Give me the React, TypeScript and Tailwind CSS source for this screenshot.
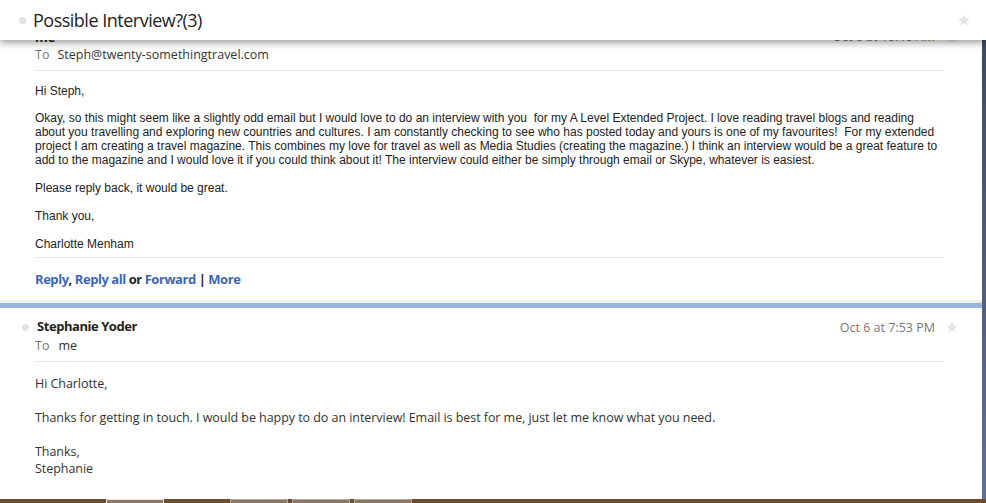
import React from "react";

const seg = { fontFamily: '"Open Sans", "Noto Sans", sans-serif' } as React.CSSProperties;
const arial = { fontFamily: '"Liberation Sans", Arial, sans-serif' } as React.CSSProperties;

function Star({ className }: { className: string }) {
  return (
    <svg viewBox="0 0 24 24" className={className} fill="currentColor">
      <path d="M12 2.5l2.9 6.6 7.1.6-5.4 4.7 1.6 7-6.2-3.8-6.2 3.8 1.6-7L2 9.7l7.1-.6z" />
    </svg>
  );
}

export default function App() {
  return (
    <div className="w-[986px] h-[503px] overflow-hidden bg-[#6b4d2e] flex flex-col" style={seg}>
      <div className="h-[499px] flex shrink-0">
        <div className="w-[982px] bg-white flex flex-col">
          {/* header */}
          <div className="relative z-10 h-[40px] w-[986px] bg-white flex items-center shadow-[0_3px_7px_rgba(0,0,0,0.38)] shrink-0">
            <div className="ml-[19px] w-[7px] h-[7px] rounded-full bg-[#e2e2e2]" />
            <div className="ml-[7px] text-[18px] text-[#222] leading-none tracking-[-0.5px]">Possible Interview?(3)</div>
            <div className="flex-1" />
            <Star className="w-[14px] h-[14px] text-[#e4e4e4] mr-[15px]" />
          </div>

          <div className="-mt-[11px] flex flex-col">
            {/* first message */}
            <div className="h-[17px] flex items-center pl-[35px] pr-[23px]">
              <span className="text-[13px] font-bold text-[#222]">me</span>
              <span className="ml-auto text-[12.5px] text-[#777]">Oct 6 at 10:40 AM</span>
              <Star className="ml-[10px] w-[14px] h-[14px] text-[#e4e4e4]" />
            </div>
            <div className="h-[18px] flex items-center pl-[35px] text-[12.5px] leading-none">
              <span className="text-[#777]">To</span>
              <span className="ml-[8px] text-[#333]">Steph@twenty-somethingtravel.com</span>
            </div>
            <div className="mt-[6px] ml-[35px] w-[908px] border-t border-[#e5e5e5]" />
            <div className="pl-[35px] pt-[13px] text-[12px] leading-[14px] text-[#222] whitespace-pre" style={arial}>
              <p className="mb-[13px]">Hi Steph,</p>
              <p className="mb-[14px]">
                {"Okay, so this might seem like a slightly odd email but I would love to do an interview with you  for my A Level Extended Project. I love reading travel blogs and reading"}
                <br />
                {"about you travelling and exploring new countries and cultures. I am constantly checking to see who has posted today and yours is one of my favourites!  For my extended"}
                <br />
                {"project I am creating a travel magazine. This combines my love for travel as well as Media Studies (creating the magazine.) I think an interview would be a great feature to"}
                <br />
                {"add to the magazine and I would love it if you could think about it! The interview could either be simply through email or Skype, whatever is easiest."}
              </p>
              <p className="mb-[14px]">Please reply back, it would be great.</p>
              <p className="mb-[14px]">Thank you,</p>
              <p>Charlotte Menham</p>
            </div>
            <div className="mt-[6px] ml-[35px] w-[908px] border-t border-[#e5e5e5]" />
            <div className="mt-[13px] pl-[35px] h-[18px] flex items-center text-[13px] font-bold text-[#222] tracking-[-0.45px]">
              <span className="text-[#3b66b5]">Reply</span>
              <span>,&nbsp;</span>
              <span className="text-[#3b66b5]">Reply all</span>
              <span>&nbsp;or&nbsp;</span>
              <span className="text-[#3b66b5]">Forward</span>
              <span>&nbsp;|&nbsp;</span>
              <span className="text-[#3b66b5]">More</span>
            </div>
            <div className="mt-[11px] h-[3px] bg-[#efefef]" />
            <div className="h-[5px] bg-[#9bb4e2]" />

            {/* second message */}
            <div className="mt-[9px] h-[20px] flex items-center pl-[22px] pr-[23px]">
              <div className="w-[7px] h-[7px] rounded-full bg-[#e2e2e2]" />
              <span className="ml-[8px] text-[13px] font-bold text-[#222] tracking-[-0.45px]">Stephanie Yoder</span>
              <span className="ml-auto mt-[3px] text-[12.5px] text-[#777]">Oct 6 at 7:53 PM</span>
              <Star className="ml-[10px] w-[14px] h-[14px] text-[#e4e4e4]" />
            </div>
            <div className="h-[18px] flex items-center pl-[35px] text-[12.5px] leading-none">
              <span className="text-[#777]">To</span>
              <span className="ml-[9px] text-[#333]">me</span>
            </div>
            <div className="mt-[6px] ml-[35px] w-[908px] border-t border-[#e5e5e5]" />
            <div className="pl-[35px] pt-[13px] text-[12.5px] leading-[17px] text-[#333] tracking-[-0.05px]">
              <p className="mb-[17px]">Hi Charlotte,</p>
              <p className="mb-[17px]">Thanks for getting in touch. I would be happy to do an interview! Email is best for me, just let me know what you need.</p>
              <p>Thanks,</p>
              <p>Stephanie</p>
            </div>
          </div>
        </div>
        <div className="w-[4px] bg-gradient-to-b from-[#3e475e] to-[#5f7194]" />
      </div>
      <div className="h-[4px] flex bg-[#6b4d2e]">
        <div className="ml-[106px] w-[58px] bg-[#8d7963] border-t border-x border-[#e8e2da]" />
        <div className="ml-[66px] w-[58px] bg-[#8a7560] border-t border-x border-[#b8a896]" />
        <div className="ml-[4px] w-[58px] bg-[#8a7560] border-t border-x border-[#b8a896]" />
        <div className="ml-[4px] w-[58px] bg-[#8a7560] border-t border-x border-[#b8a896]" />
      </div>
    </div>
  );
}
